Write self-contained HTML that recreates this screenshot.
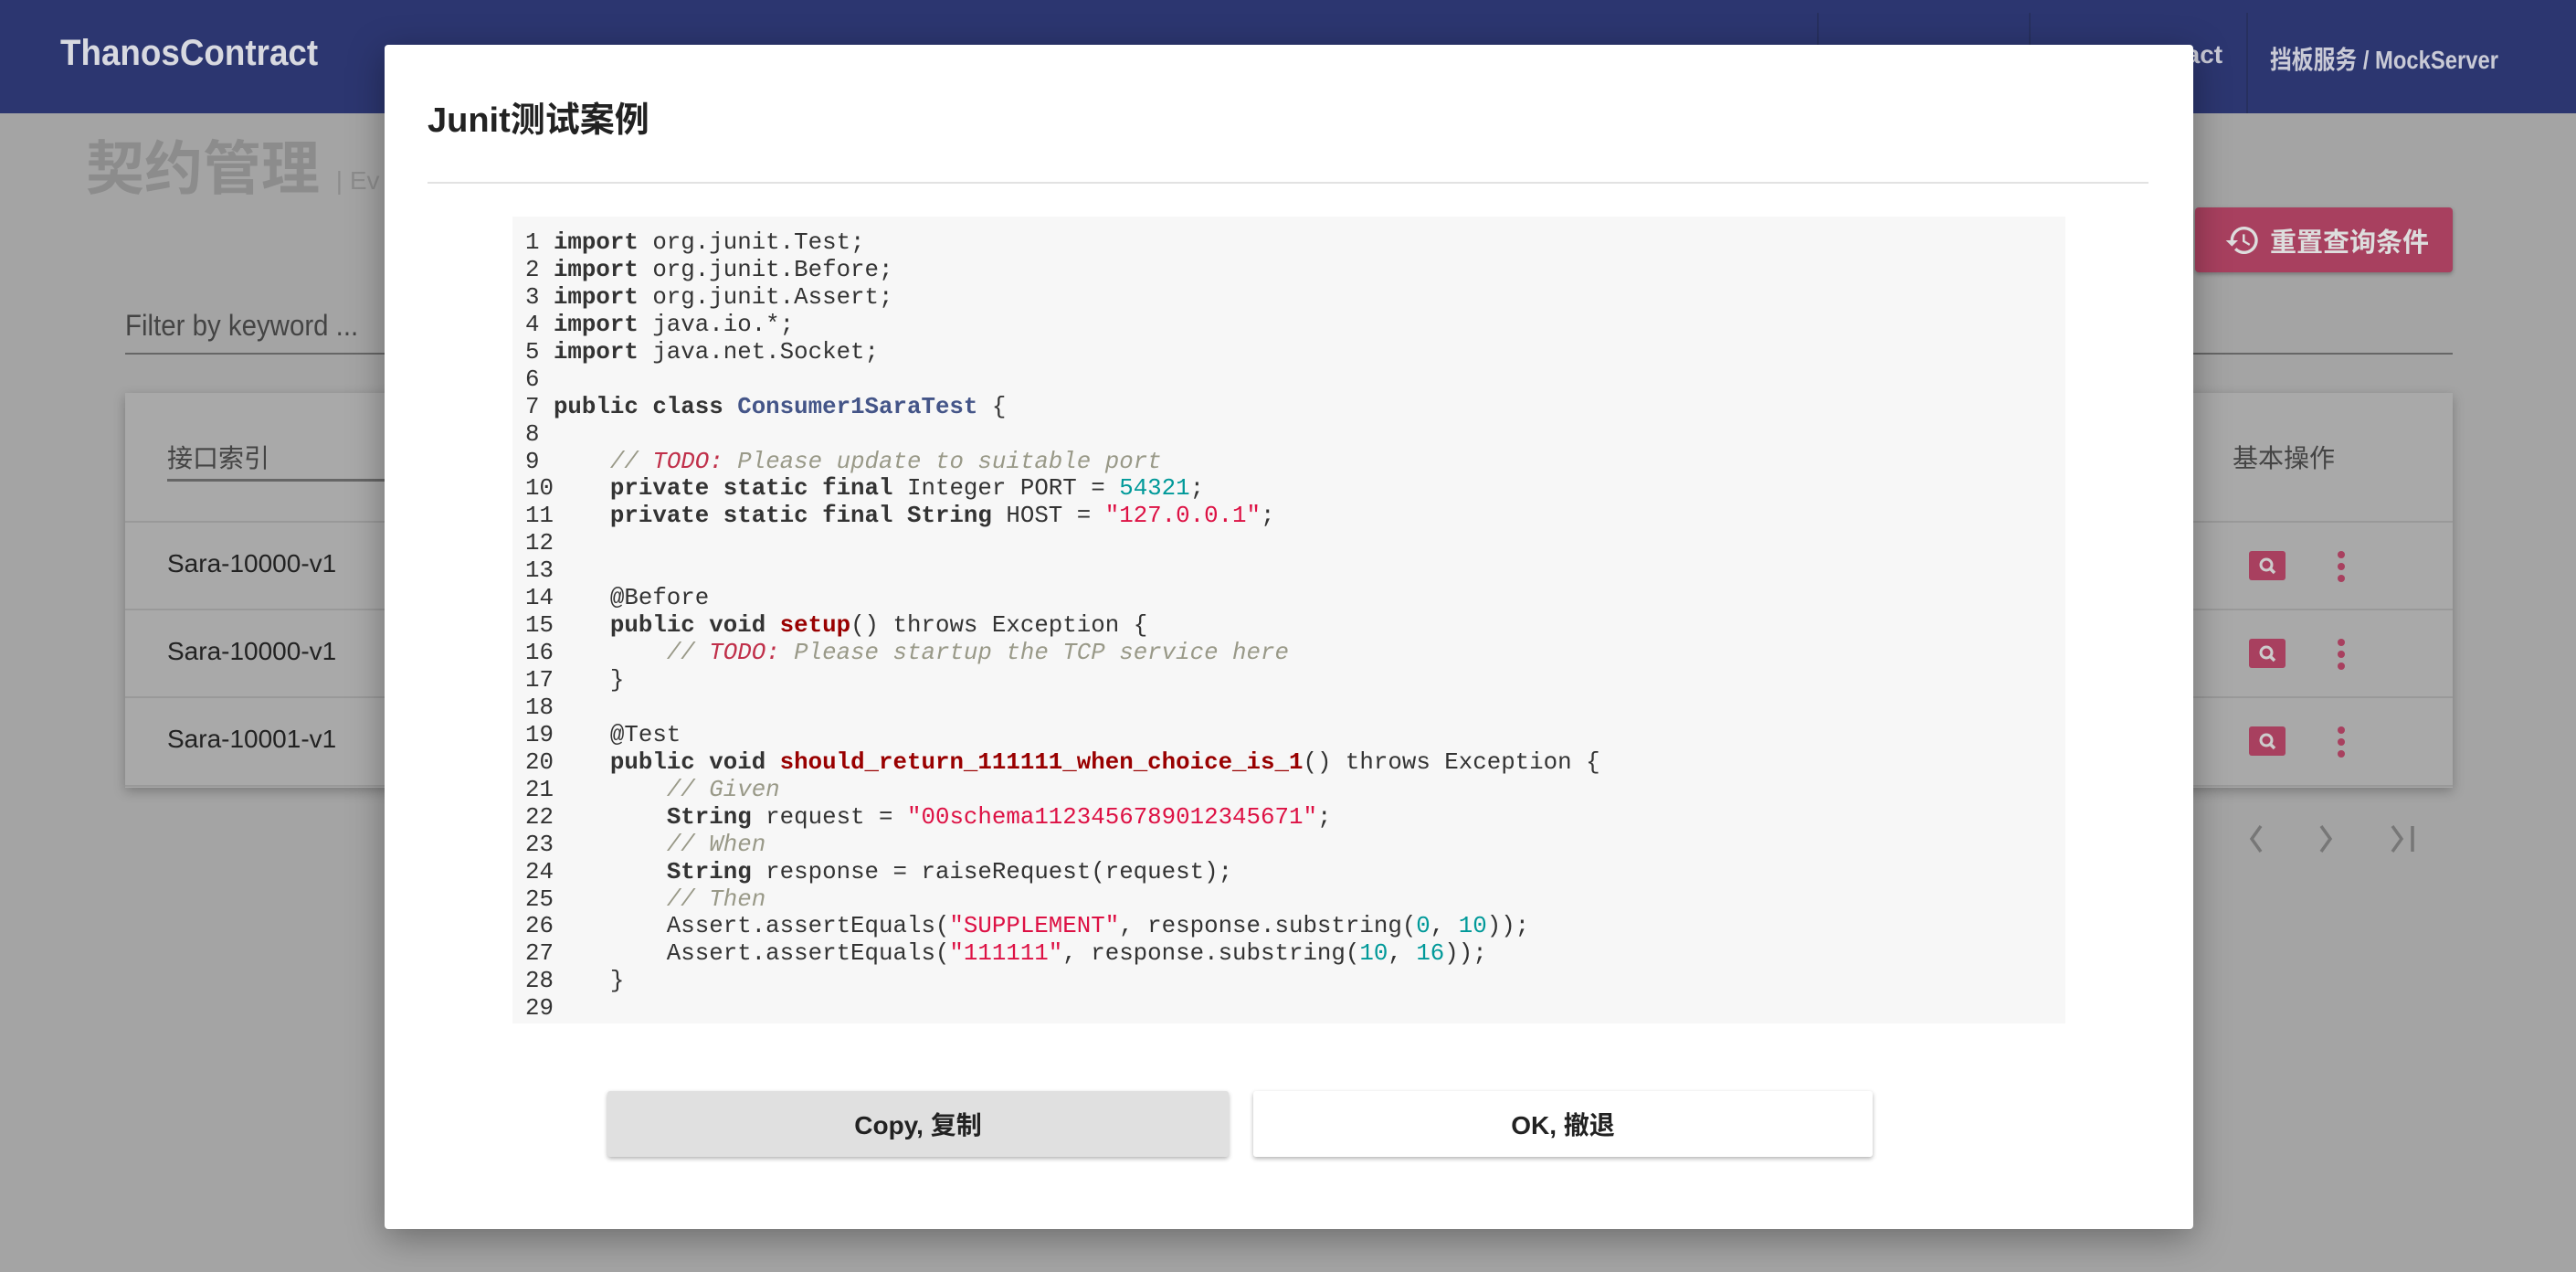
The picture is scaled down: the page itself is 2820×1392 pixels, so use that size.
<!DOCTYPE html>
<html><head><meta charset="utf-8"><style>
*{margin:0;padding:0;box-sizing:border-box}
body{width:2820px;height:1392px;overflow:hidden;background:#a4a4a4;font-family:"Liberation Sans","Noto Sans CJK SC",sans-serif;position:relative}
.a{position:absolute}
.nav{left:0;top:0;width:2820px;height:124px;background:#2c3670}
.sep{top:14px;width:2px;height:110px;background:#27305f}
.card{left:137px;top:430px;width:2548px;height:432px;background:#a9a9a9;box-shadow:0 4px 12px rgba(0,0,0,.25)}
.rowline{left:137px;width:2548px;height:2px;background:#999}
.rt{left:183px;font-size:28px;color:#222}
.dots{width:8px}
.dots i{display:block;width:8px;height:8px;border-radius:50%;background:#a8405f;margin-bottom:5px}
.modal{left:421px;top:49px;width:1980px;height:1296px;background:#fff;border-radius:4px;box-shadow:0 10px 40px rgba(0,0,0,.35)}
.code{left:561px;top:237px;width:1700px;height:883px;background:#f7f7f7;padding:14px 0 0 14px;font-family:"Liberation Mono",monospace;font-size:25.8px;line-height:29.93px;color:#333;white-space:pre}
.n{display:inline-block;width:2ch}
.k{font-weight:bold;color:#333}
.c{color:#998;font-style:italic}
.t{color:#c0304a;font-style:italic}
.s{color:#d14}
.m{color:#099}
.cl{color:#445588;font-weight:bold}
.f{color:#900;font-weight:bold}
.btn{top:1194px;height:72px;font-size:28px;font-weight:bold;color:#222;display:flex;align-items:center;justify-content:center;border-radius:3px;box-shadow:0 2px 5px rgba(0,0,0,.3)}
</style></head><body>
<div class="a nav"></div>
<div class="a" style="left:66px;top:36px;font-size:40px;font-weight:bold;color:#d8d9e0;transform:scaleX(.92);transform-origin:left">ThanosContract</div>
<div class="a sep" style="left:1989px"></div>
<div class="a sep" style="left:2221px"></div>
<div class="a sep" style="left:2459px"></div>
<div class="a" style="left:2318px;top:44px;font-size:28px;font-weight:bold;color:#c9cad6">Contract</div>
<div class="a" style="left:2485px;top:44px;font-size:28px;font-weight:bold;color:#c9cad6;transform:scaleX(.85);transform-origin:left;white-space:nowrap">挡板服务 / MockServer</div>
<div class="a" style="left:94px;top:134px;font-size:64px;font-weight:bold;color:#8c8c8c">契约管理 <span style="font-size:28px;font-weight:normal">| Ev</span></div>
<div class="a" style="left:2403px;top:227px;width:282px;height:71px;background:#a8405f;border-radius:4px;box-shadow:0 2px 5px rgba(0,0,0,.3);color:#ddd;font-size:29px;font-weight:bold;display:flex;align-items:center;padding-left:32px">
<svg width="40" height="40" viewBox="0 0 24 24" style="margin-right:10px"><path d="M13 3a9 9 0 0 0-9 9H1l4 4 4-4H6a7 7 0 1 1 2 4.9l-1.4 1.4A9 9 0 1 0 13 3zm-1 5v5l4.3 2.5.7-1.2-3.5-2.1V8z" fill="#ddd"/></svg>重置查询条件</div>
<div class="a" style="left:137px;top:338px;font-size:32px;color:#444;transform:scaleX(.92);transform-origin:left">Filter by keyword ...</div>
<div class="a" style="left:137px;top:386px;width:2548px;height:2px;background:#666"></div>
<div class="a card"></div>
<div class="a" style="left:183px;top:480px;font-size:28px;color:#444">接口索引</div>
<div class="a" style="left:183px;top:524px;width:240px;height:3px;background:#666"></div>
<div class="a" style="left:2444px;top:480px;font-size:28px;color:#444">基本操作</div>
<div class="a rowline" style="top:570px"></div>
<div class="a rowline" style="top:666px"></div>
<div class="a rowline" style="top:762px"></div>
<div class="a rowline" style="top:859px"></div>
<div class="a rt" style="top:601px">Sara-10000-v1</div>
<div class="a rt" style="top:697px">Sara-10000-v1</div>
<div class="a rt" style="top:793px">Sara-10001-v1</div>
<svg class="a" style="left:2462px;top:603px" width="40" height="32"><rect width="40" height="32" rx="3" fill="#a8405f"/><circle cx="19" cy="15" r="6" fill="none" stroke="#ccc" stroke-width="3"/><path d="M23 19l5 5" stroke="#ccc" stroke-width="3.5"/></svg>
<svg class="a" style="left:2462px;top:699px" width="40" height="32"><rect width="40" height="32" rx="3" fill="#a8405f"/><circle cx="19" cy="15" r="6" fill="none" stroke="#ccc" stroke-width="3"/><path d="M23 19l5 5" stroke="#ccc" stroke-width="3.5"/></svg>
<svg class="a" style="left:2462px;top:795px" width="40" height="32"><rect width="40" height="32" rx="3" fill="#a8405f"/><circle cx="19" cy="15" r="6" fill="none" stroke="#ccc" stroke-width="3"/><path d="M23 19l5 5" stroke="#ccc" stroke-width="3.5"/></svg>
<div class="a dots" style="left:2559px;top:603px"><i></i><i></i><i></i></div>
<div class="a dots" style="left:2559px;top:699px"><i></i><i></i><i></i></div>
<div class="a dots" style="left:2559px;top:795px"><i></i><i></i><i></i></div>
<svg class="a" style="left:2455px;top:900px" width="200" height="36" fill="none" stroke="#777" stroke-width="3.5"><path d="M20 4L10 18l10 14"/><path d="M86 4l10 14-10 14"/><path d="M164 4l10 14-10 14M186 4v28"/></svg>

<div class="a modal"></div>
<div class="a" style="left:468px;top:100px;font-size:38px;font-weight:bold;color:#222">Junit测试案例</div>
<div class="a" style="left:468px;top:199px;width:1884px;height:2px;background:#e2e2e2"></div>
<div class="a code"><span class="n">1</span><span class="k">import</span> org.junit.Test;
<span class="n">2</span><span class="k">import</span> org.junit.Before;
<span class="n">3</span><span class="k">import</span> org.junit.Assert;
<span class="n">4</span><span class="k">import</span> java.io.*;
<span class="n">5</span><span class="k">import</span> java.net.Socket;
<span class="n">6</span>
<span class="n">7</span><span class="k">public class</span> <span class="cl">Consumer1SaraTest</span> {
<span class="n">8</span>
<span class="n">9</span>    <span class="c">// </span><span class="t">TODO:</span><span class="c"> Please update to suitable port</span>
<span class="n">10</span>    <span class="k">private static final</span> Integer PORT = <span class="m">54321</span>;
<span class="n">11</span>    <span class="k">private static final String</span> HOST = <span class="s">"127.0.0.1"</span>;
<span class="n">12</span>
<span class="n">13</span>
<span class="n">14</span>    @Before
<span class="n">15</span>    <span class="k">public void</span> <span class="f">setup</span>() throws Exception {
<span class="n">16</span>        <span class="c">// </span><span class="t">TODO:</span><span class="c"> Please startup the TCP service here</span>
<span class="n">17</span>    }
<span class="n">18</span>
<span class="n">19</span>    @Test
<span class="n">20</span>    <span class="k">public void</span> <span class="f">should_return_111111_when_choice_is_1</span>() throws Exception {
<span class="n">21</span>        <span class="c">// Given</span>
<span class="n">22</span>        <span class="k">String</span> request = <span class="s">"00schema1123456789012345671"</span>;
<span class="n">23</span>        <span class="c">// When</span>
<span class="n">24</span>        <span class="k">String</span> response = raiseRequest(request);
<span class="n">25</span>        <span class="c">// Then</span>
<span class="n">26</span>        Assert.assertEquals(<span class="s">"SUPPLEMENT"</span>, response.substring(<span class="m">0</span>, <span class="m">10</span>));
<span class="n">27</span>        Assert.assertEquals(<span class="s">"111111"</span>, response.substring(<span class="m">10</span>, <span class="m">16</span>));
<span class="n">28</span>    }
<span class="n">29</span></div>
<div class="a btn" style="left:665px;width:680px;background:#e0e0e0">Copy, 复制</div>
<div class="a btn" style="left:1372px;width:678px;background:#fff">OK, 撤退</div>
</body></html>
